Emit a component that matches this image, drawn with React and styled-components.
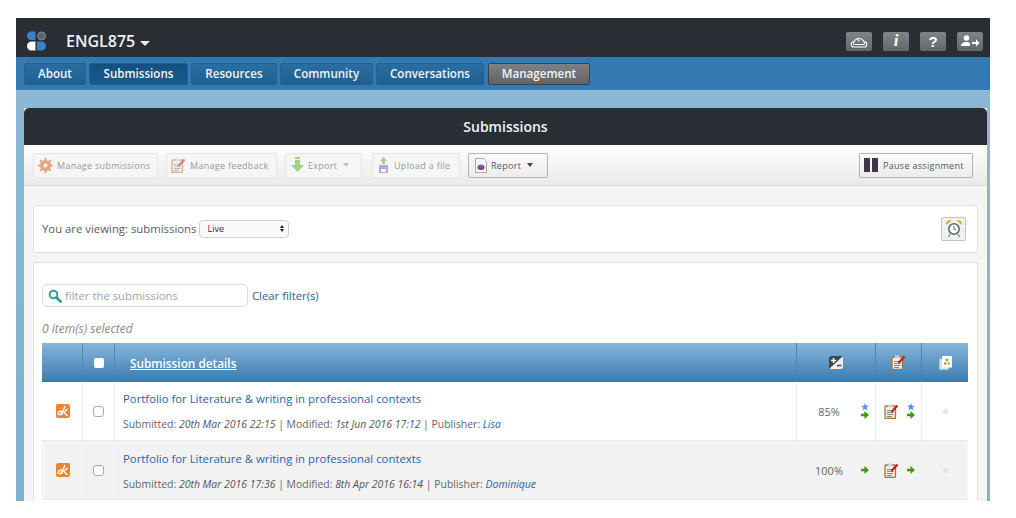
import React from 'react';
import styled, { createGlobalStyle } from 'styled-components';

const GlobalStyle = createGlobalStyle`
  html, body { margin: 0; padding: 0; background: #fff; }
  body { font-family: "Open Sans", "Liberation Sans", sans-serif; color: #555; }
  * { box-sizing: border-box; }
`;

const Frame = styled.div`
  margin: 18px 0 0 16px;
  width: 974px;
  height: 483px;
  overflow: hidden;
  background: linear-gradient(#8fbad6, #7fb0d0);
  display: flex;
  flex-direction: column;
`;

const TopBar = styled.div`
  height: 39px;
  flex: none;
  background: #282e33;
  display: flex;
  align-items: center;
  padding: 7px 7px 0 10px;
`;

const Course = styled.div`
  margin-left: 19px;
  font-size: 16px;
  font-weight: 600;
  color: #f2f2f2;
  display: flex;
  align-items: center;
  gap: 5px;
`;

const Caret = styled.span`
  width: 0;
  height: 0;
  margin-top: ${(p) => (p.$small ? 0 : 5)}px;
  margin-left: ${(p) => (p.$small ? 2 : 0)}px;
  border-left: ${(p) => (p.$small ? 3.5 : 5)}px solid transparent;
  border-right: ${(p) => (p.$small ? 3.5 : 5)}px solid transparent;
  border-top: ${(p) => (p.$small ? 4 : 5)}px solid ${(p) => p.$color || '#eee'};
`;

const TopIcons = styled.div`
  margin-left: auto;
  display: flex;
  gap: 11px;
`;

const TopIcon = styled.div`
  width: 26px;
  height: 19px;
  border-radius: 2px;
  background: linear-gradient(#7f8488, #62676b);
  display: flex;
  align-items: center;
  justify-content: center;
  color: #fff;
  font: ${(p) => (p.$serif ? 'italic bold 17px "Liberation Serif", serif' : 'bold 15px "Liberation Sans", sans-serif')};
`;

const NavBar = styled.nav`
  height: 33px;
  flex: none;
  background: #337ab2;
  display: flex;
  gap: 3px;
  padding: 6px 0 0 8px;
`;

const Tab = styled.div`
  height: 22px;
  width: ${(p) => p.$width}px;
  margin-left: ${(p) => (p.$grey ? 1 : 0)}px;
  text-align: center;
  border-radius: 2px;
  border: 1px solid ${(p) => (p.$grey ? '#3c4248' : '#24608f')};
  background: ${(p) =>
    p.$grey
      ? 'linear-gradient(#7d8185, #606468)'
      : p.$active
      ? 'linear-gradient(#14507f, #185a8c)'
      : 'linear-gradient(#2a6ea1, #1f5f92)'};
  color: #f2f5f8;
  font-size: 11.6px;
  font-weight: 600;
  line-height: 20px;
  white-space: nowrap;
`;

const Body = styled.div`
  flex: 1;
  min-height: 0;
  padding: 18px 3px 0 8px;
`;

const Panel = styled.section`
  height: 100%;
  background: #f5f5f5;
  display: flex;
  flex-direction: column;
`;

const PanelHead = styled.div`
  height: 37px;
  flex: none;
  background: #282e33;
  border-radius: 5px 5px 0 0;
  color: #f4f4f4;
  font-size: 14px;
  font-weight: 600;
  text-align: center;
  line-height: 37px;
`;

const Toolbar = styled.div`
  height: 41px;
  flex: none;
  display: flex;
  align-items: flex-start;
  padding: 8px 14px 0 9px;
  background: linear-gradient(#fff, #e9e9e9);
  border-bottom: 1px solid #dcdcdc;
`;

const ToolButton = styled.div`
  height: 25px;
  width: ${(p) => p.$width}px;
  margin-right: ${(p) => p.$gap ?? 8}px;
  margin-left: ${(p) => (p.$right ? 'auto' : 0)};
  flex: none;
  border-radius: 2px;
  border: 1px solid ${(p) => (p.$off ? '#e6e6e6' : '#b4b4b4')};
  background: ${(p) => (p.$off ? '#f6f6f6' : 'linear-gradient(#fbfbfb, #ececec)')};
  color: ${(p) => (p.$off ? '#9a9a9a' : '#555')};
  font-size: 9px;
  letter-spacing: 0.3px;
  line-height: 21px;
  display: flex;
  align-items: center;
  gap: 4px;
  padding: 0 0 1px ${(p) => p.$pad ?? 4}px;
  white-space: nowrap;
`;

const Card = styled.div`
  margin: 0 9px;
  background: #fff;
  border: 1px solid #e0e0e0;
  border-radius: 3px;
`;

const ViewCard = styled(Card)`
  margin-top: 19px;
  height: 48px;
  display: flex;
  align-items: center;
  padding: 0 11px 1px 8px;
  font-size: 11.35px;
  color: #5c5c5c;
`;

const FakeSelect = styled.div`
  width: 90px;
  height: 18px;
  margin-left: 3px;
  border: 1px solid #d0d0d0;
  border-radius: 4px;
  background: #fafafa;
  font-size: 9px;
  color: #333;
  display: flex;
  align-items: center;
  justify-content: space-between;
  padding: 0 4px 0 7px;
`;

const Stepper = styled.span`
  display: flex;
  flex-direction: column;
  gap: 1px;
`;

const StepUp = styled.span`
  border-left: 2.5px solid transparent;
  border-right: 2.5px solid transparent;
  border-bottom: 3px solid #222;
`;

const StepDown = styled.span`
  border-left: 2.5px solid transparent;
  border-right: 2.5px solid transparent;
  border-top: 3px solid #222;
`;

const AlarmButton = styled.div`
  margin-left: auto;
  width: 25px;
  height: 24px;
  border: 1px solid #c4c4c4;
  border-radius: 2px;
  background: #f0f0f0;
  display: flex;
  align-items: center;
  justify-content: center;
`;

const ListCard = styled(Card)`
  margin-top: 9px;
  flex: 1;
  border-bottom: 0;
  border-radius: 3px 3px 0 0;
  padding: 21px 9px 0 8px;
`;

const FilterRow = styled.div`
  display: flex;
  align-items: center;
  gap: 4px;
`;

const FilterBox = styled.div`
  width: 206px;
  height: 23px;
  border: 1px solid #d6dcdc;
  border-radius: 5px;
  display: flex;
  align-items: center;
  gap: 3px;
  padding-left: 5px;
  font-size: 11.3px;
  color: #a4a4a4;
`;

const ClearLink = styled.a`
  font-size: 11.3px;
  color: #2d5f9e;
`;

const Selected = styled.div`
  margin-top: 13px;
  height: 23px;
  font-size: 12px;
  line-height: 17px;
  font-style: italic;
  color: #888;
`;

const Row = styled.div`
  display: grid;
  grid-template-columns: 40px 32px 682px 79px 46px 47px;
  width: 926px;
  height: ${(p) => p.$height}px;
`;

const HeadRow = styled(Row)`
  background: linear-gradient(#86b6da, #3a7bae);
`;

const HeadCell = styled.div`
  border-left: 1px solid #4e87b4;
  display: flex;
  align-items: center;
  justify-content: center;
  &:first-child { border-left: 0; }
`;

const HeadTitle = styled.a`
  margin-right: auto;
  padding-left: 15px;
  color: #fff;
  font-size: 11.8px;
  font-weight: 600;
  text-decoration: underline;
`;

const HeadCheck = styled.span`
  width: 10px;
  height: 10px;
  background: #fff;
  border-radius: 2px;
`;

const BodyRow = styled(Row)`
  border-bottom: 2px solid #e8eef5;
`;

const Cell = styled.div`
  border-left: 1px solid ${(p) => (p.$first ? 'transparent' : '#e8eef5')};
  background: ${(p) => (p.$shade ? '#f2f2f2' : '#fff')};
  box-shadow: ${(p) => (p.$shade ? 'inset 0 0 0 1px #f8f8f8' : 'none')};
  display: flex;
  align-items: center;
  justify-content: center;
  position: relative;
`;

const Box = styled.span`
  width: 11px;
  height: 11px;
  border: 1px solid #aaa;
  border-radius: 3px;
  background: #fff;
  margin-top: 1px;
`;

const Details = styled(Cell)`
  display: block;
  padding: 9px 0 0 8px;
`;

const Title = styled.a`
  display: block;
  font-size: 11.35px;
  color: #2d62a6;
  white-space: nowrap;
`;

const Meta = styled.div`
  margin-top: 11px;
  font-size: 10.45px;
  color: #666;
  white-space: nowrap;
  em { color: #555; }
`;

const Publisher = styled.em`
  && { color: #2d62a6; }
`;

const Score = styled.span`
  display: flex;
  font-size: 11px;
  color: #666;
  margin-right: ${(p) => p.$right}px;
`;

const Marks = styled.div`
  position: absolute;
  right: ${(p) => p.$right}px;
  top: 50%;
  transform: translateY(-50%);
  display: flex;
  flex-direction: column;
  align-items: center;
`;

const Dot = styled.span`
  width: 5px;
  height: 5px;
  border-radius: 50%;
  background: #e4e4e4;
`;

const Logo = () => (
  <svg width="21" height="20" viewBox="0 0 21 20">
    <path d="M1 5a4.500 4.500 0 0 1 4.500-4.500H9.500V9H5.500A4.500 4.500 0 0 1 1 5z" fill="#3b82c4" />
    <circle cx="15.500" cy="5" r="4" fill="#5b6268" stroke="#8a8f93" strokeWidth="1" />
    <path d="M1 15a4.500 4.500 0 0 1 4.500-4.500H9.500V19.500H5.500A4.500 4.500 0 0 1 1 15z" fill="#fff" />
    <path d="M11 10.500h4.500a4.500 4.500 0 0 1 0 9H11z" fill="#3b82c4" />
  </svg>
);

const Gauge = () => (
  <svg width="22" height="15" viewBox="0 0 22 15" fill="none" stroke="#fff" strokeWidth="1.100">
    <path d="M5.500 10a5.500 5.500 0 1 1 11 0" />
    <path d="M5.500 7.500a2.800 2.800 0 0 0 0 5.500h11a2.800 2.800 0 0 0 0-5.500" />
    <path d="M5.500 10.500h11M9 4.500l2.500 3" />
  </svg>
);

const Leave = () => (
  <svg width="20" height="12" viewBox="0 0 20 12" fill="#fff">
    <circle cx="6.500" cy="3" r="2.800" />
    <path d="M1 11c0-2.500 2-3.500 4-4h3c1 .5 2 1 2 2v2z" />
    <path d="M12 7h4V4.500L19.500 8 16 11.500V9h-4z" />
  </svg>
);

const Gear = () => (
  <svg width="15" height="15" viewBox="0 0 15 15">
    <circle cx="7.500" cy="7.500" r="4" fill="none" stroke="#e8a582" strokeWidth="3" />
    <path d="M7.500 0v15M0 7.500h15M2.200 2.200l10.600 10.600M12.800 2.200L2.200 12.800" stroke="#e8a582" strokeWidth="2" />
    <circle cx="7.500" cy="7.500" r="2" fill="#f6f6f6" />
  </svg>
);

const Clipboard = ({ size = 15, faded }) => (
  <svg width={size} height={size} viewBox="0 0 15 15" opacity={faded ? 0.55 : 1}>
    <rect x="1" y="2" width="10.500" height="12.500" rx="1" fill="#f6efe2" stroke="#a8743e" strokeWidth="1.300" />
    <rect x="4" y="0.500" width="4.500" height="2.800" rx="0.500" fill="#cfcfcf" />
    <path d="M3 6.500h5M3 8.500h6.500M3 10.500h6.500M3 12.500h5" stroke="#777" strokeWidth="0.900" />
    <path d="M7.500 8l6-6.500" stroke="#c4161c" strokeWidth="2" />
  </svg>
);

const DownArrow = () => (
  <svg width="13" height="17" viewBox="0 0 13 17" fill="#a4cf8a">
    <path d="M4 0h5v2H4zM4 3h5v5h4l-6.500 7L0 8h4z" />
  </svg>
);

const Upload = () => (
  <svg width="13" height="17" viewBox="0 0 13 17">
    <path d="M6.500 0L10 4H8v3H5V4H3z" fill="#a4cf8a" />
    <rect x="2" y="8" width="9" height="8" fill="#b6a8d8" />
    <rect x="4" y="12" width="5" height="3" fill="#f4f4f4" />
  </svg>
);

const ReportIcon = () => (
  <svg width="12" height="15" viewBox="0 0 12 15">
    <path d="M.500.500h8l3 3v11h-11z" fill="#fafafa" stroke="#aaa" />
    <ellipse cx="6" cy="9.500" rx="3.500" ry="2.500" fill="#d02a3a" />
    <path d="M2.500 9a3.500 2.500 0 0 1 7 0z" fill="#4a6ed0" />
  </svg>
);

const Pause = () => (
  <svg width="15" height="14" viewBox="0 0 15 14" fill="#413548">
    <rect x="0" y="0" width="6" height="14" />
    <rect x="8" y="0" width="6" height="14" />
  </svg>
);

const Alarm = () => (
  <svg width="18" height="19" viewBox="0 0 18 19">
    <path d="M1 6a4 4 0 0 1 5.500-4.500zM17 6a4 4 0 0 0-5.500-4.500z" fill="#e9a02a" />
    <circle cx="9" cy="10" r="5.200" fill="#fff" stroke="#5d6a70" strokeWidth="1.600" />
    <path d="M9 7v3.200l2 1M5 15l-1.500 3M13 15l1.500 3" fill="none" stroke="#5d6a70" />
  </svg>
);

const Search = () => (
  <svg width="14" height="14" viewBox="0 0 14 14" fill="none" stroke="#3f9a98">
    <circle cx="5.500" cy="5.500" r="3.800" strokeWidth="2" />
    <path d="M8.500 8.500l4 4" strokeWidth="2.800" strokeLinecap="round" />
  </svg>
);

const PlusMinus = () => (
  <svg width="14" height="13" viewBox="0 0 14 13">
    <rect width="14" height="13" rx="2" fill="#eee" />
    <path d="M0 13V2a2 2 0 0 1 2-2h12z" fill="#444" />
    <path d="M2 4.500h5M4.500 2v5" stroke="#fff" strokeWidth="1.500" />
    <path d="M8 9.500h4.500" stroke="#444" strokeWidth="1.500" />
  </svg>
);

const Pages = () => (
  <svg width="13" height="14" viewBox="0 0 13 14">
    <rect x="0.500" y="3" width="9" height="10.500" fill="#d6e2ea" stroke="#c2d2de" strokeWidth="0.500" />
    <rect x="3" y="0" width="10" height="11.500" fill="#fff" />
    <circle cx="8" cy="4" r="1.300" fill="#5aa83a" />
    <circle cx="6.200" cy="7.500" r="1.300" fill="#e8792e" />
    <circle cx="9.800" cy="7.500" r="1.300" fill="#e8a02e" />
  </svg>
);

const Badge = () => (
  <svg width="14" height="14" viewBox="0 0 14 14">
    <rect width="14" height="14" rx="2" fill="#ec8434" />
    <path d="M2 11c0-3 2-4 3.500-4S5 11 3 11M5.500 11L9 2M11.500 5L8 8.500l3.500 3.500" fill="none" stroke="#fff" strokeWidth="1.400" />
  </svg>
);

const Star = () => (
  <svg width="8" height="8" viewBox="0 0 8 8" fill="#4a90e8">
    <path d="M4 0l1 2.700 3 .1-2.400 1.800.9 3L4 5.800 1.500 7.600l.9-3L0 2.800l3-.1z" />
  </svg>
);

const Arrow = () => (
  <svg width="8" height="8" viewBox="0 0 7 7" fill="#3d9a0c">
    <path d="M0 2.500h3V0l4 3.500L3 7V4.500H0z" />
  </svg>
);

const rows = [
  {
    height: 60,
    submitted: '20th Mar 2016 22:15',
    modified: '1st Jun 2016 17:12',
    publisher: 'Lisa',
    score: '85%',
    star: true,
  },
  {
    height: 58,
    shade: true,
    submitted: '20th Mar 2016 17:36',
    modified: '8th Apr 2016 16:14',
    publisher: 'Dominique',
    score: '100%',
  },
];

const tabs = [
  { label: 'About', width: 62 },
  { label: 'Submissions', width: 99, active: true },
  { label: 'Resources', width: 86 },
  { label: 'Community', width: 93 },
  { label: 'Conversations', width: 108 },
  { label: 'Management', width: 102, grey: true },
];

const App = () => {
  return (
    <>
      <GlobalStyle />
      <Frame>
        <TopBar>
          <Logo />
          <Course>
            ENGL875 <Caret />
          </Course>
          <TopIcons>
            <TopIcon><Gauge /></TopIcon>
            <TopIcon $serif>i</TopIcon>
            <TopIcon>?</TopIcon>
            <TopIcon><Leave /></TopIcon>
          </TopIcons>
        </TopBar>
        <NavBar>
          {tabs.map((t) => (
            <Tab key={t.label} $width={t.width} $active={t.active} $grey={t.grey}>
              {t.label}
            </Tab>
          ))}
        </NavBar>
        <Body>
          <Panel>
            <PanelHead>Submissions</PanelHead>
            <Toolbar>
              <ToolButton $off $width={125}><Gear /> Manage submissions</ToolButton>
              <ToolButton $off $width={111}><Clipboard faded /> Manage feedback</ToolButton>
              <ToolButton $off $width={77} $gap={10} $pad={5}><DownArrow /> Export <Caret $small $color="#bbb" /></ToolButton>
              <ToolButton $off $width={88}><Upload /> Upload a file</ToolButton>
              <ToolButton $width={80} $pad={6}><ReportIcon /> Report <Caret $small $color="#444" /></ToolButton>
              <ToolButton $right $width={114} $gap={0}><Pause /> Pause assignment</ToolButton>
            </Toolbar>
            <ViewCard>
              You are viewing: submissions
              <FakeSelect>
                Live
                <Stepper><StepUp /><StepDown /></Stepper>
              </FakeSelect>
              <AlarmButton><Alarm /></AlarmButton>
            </ViewCard>
            <ListCard>
              <FilterRow>
                <FilterBox><Search /> filter the submissions</FilterBox>
                <ClearLink>Clear filter(s)</ClearLink>
              </FilterRow>
              <Selected>0 item(s) selected</Selected>
              <HeadRow $height={39}>
                <HeadCell />
                <HeadCell><HeadCheck /></HeadCell>
                <HeadCell><HeadTitle>Submission details</HeadTitle></HeadCell>
                <HeadCell><PlusMinus /></HeadCell>
                <HeadCell><Clipboard size={15} /></HeadCell>
                <HeadCell><Pages /></HeadCell>
              </HeadRow>
              {rows.map((r) => (
                <BodyRow key={r.publisher} $height={r.height}>
                  <Cell $first $shade={r.shade}><Badge /></Cell>
                  <Cell $shade={r.shade}><Box /></Cell>
                  <Details $shade={r.shade}>
                    <Title>Portfolio for Literature &amp; writing in professional contexts</Title>
                    <Meta>
                      Submitted: <em>{r.submitted}</em> | Modified: <em>{r.modified}</em> | Publisher:{' '}
                      <Publisher>{r.publisher}</Publisher>
                    </Meta>
                  </Details>
                  <Cell $shade={r.shade}>
                    <Score $right={14}>{r.score}</Score>
                    <Marks $right={6}>
                      {r.star && <Star />}
                      <Arrow />
                    </Marks>
                  </Cell>
                  <Cell $shade={r.shade}>
                    <Score $right={14}><Clipboard size={15} /></Score>
                    <Marks $right={6}>
                      {r.star && <Star />}
                      <Arrow />
                    </Marks>
                  </Cell>
                  <Cell $shade={r.shade}><Dot /></Cell>
                </BodyRow>
              ))}
            </ListCard>
          </Panel>
        </Body>
      </Frame>
    </>
  );
};

export default App;
